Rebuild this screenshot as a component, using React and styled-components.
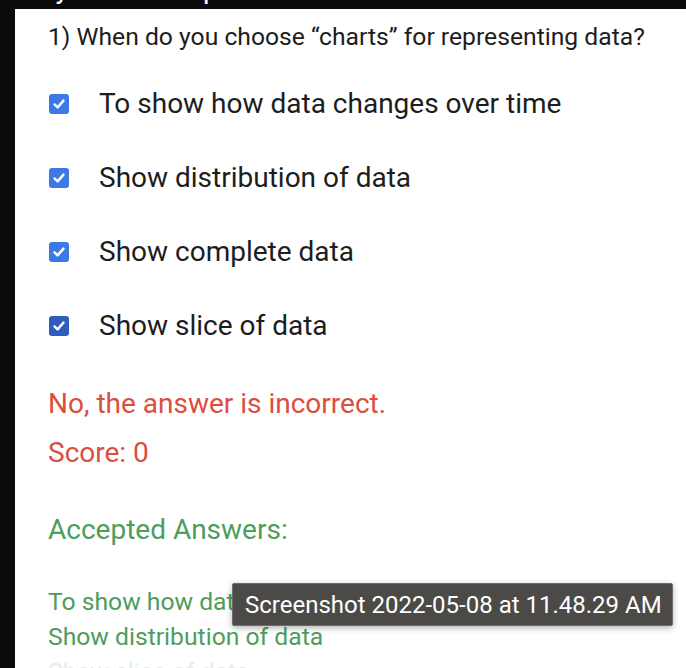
import React from "react";
import styled, { createGlobalStyle } from "styled-components";

const Global = createGlobalStyle`
  html, body { margin: 0; padding: 0; background: #0b0b0b; }
  body { font-family: Roboto, "Liberation Sans", sans-serif; overflow: hidden; }
`;

const Frame = styled.div`
  width: 686px;
  height: 668px;
  display: flex;
  flex-direction: column;
  background: #0b0b0b;
  overflow: hidden;
`;

const TopBar = styled.div`
  height: 9px;
  flex: none;
  overflow: hidden;
  display: flex;
  align-items: flex-start;
  padding-left: 31px;
`;

const TopTitle = styled.span`
  color: #ffffff;
  font-size: 28px;
  line-height: 28px;
  margin-top: -25px;
  white-space: nowrap;
`;

const Body = styled.div`
  flex: 1;
  display: flex;
  padding-left: 15px;
  min-height: 0;
`;

const Panel = styled.div`
  position: relative;
  flex: 1;
  background: #ffffff;
  padding-left: 33px;
  overflow: hidden;
`;

const Question = styled.div`
  margin-top: 14px;
  font-size: 24.7px;
  line-height: 28px;
  color: #1d1d1d;
  white-space: nowrap;
`;

const Options = styled.div`
  margin-top: 16px;
  display: flex;
  flex-direction: column;
`;

const OptionRow = styled.label`
  height: 74px;
  display: flex;
  align-items: center;
  gap: 30px;
`;

const Box = styled.span`
  width: 20px;
  height: 20px;
  border-radius: 3px;
  background: ${(p) => (p.$dark ? "#2f5dbd" : "#3c78e6")};
  display: flex;
  align-items: center;
  justify-content: center;
  flex: none;
  margin-left: 1px;
`;

const OptionText = styled.span`
  font-size: 28px;
  line-height: 32px;
  color: #1d1d1d;
  white-space: nowrap;
`;

const Feedback = styled.div`
  font-size: 28px;
  line-height: 30px;
  color: ${(p) => p.$color};
  margin-top: ${(p) => p.$mt}px;
  white-space: nowrap;
`;

const Answers = styled.div`
  margin-top: 39px;
  display: flex;
  flex-direction: column;
`;

const AnswerLine = styled.div`
  font-size: 24.7px;
  line-height: 35px;
  color: ${(p) => (p.$faded ? "#e4efe6" : "#4d9d5c")};
  white-space: nowrap;
`;

const Tooltip = styled.div`
  position: absolute;
  left: 217px;
  top: 574px;
  width: 441px;
  height: 43px;
  box-sizing: border-box;
  background: #4b4a47;
  border: 1px solid #6f6e6b;
  border-radius: 2px;
  box-shadow: 0 2px 6px rgba(0, 0, 0, 0.3);
  color: #ffffff;
  font-size: 24px;
  display: flex;
  align-items: center;
  padding-left: 12px;
  white-space: nowrap;
`;

const Check = () => (
  <svg width="14" height="14" viewBox="0 0 14 14">
    <path d="M2.5 7.4 L5.6 10.4 L11.5 3.6" fill="none" stroke="#fff" strokeWidth="2.4" strokeLinecap="round" strokeLinejoin="round" />
  </svg>
);

const options = [
  "To show how data changes over time",
  "Show distribution of data",
  "Show complete data",
  "Show slice of data",
];

export default function App() {
  return (
    <Frame>
      <Global />
      <TopBar>
        <TopTitle>My Course Report</TopTitle>
      </TopBar>
      <Body>
        <Panel>
          <Question>1) When do you choose “charts” for representing data?</Question>
          <Options>
            {options.map((o, i) => (
              <OptionRow key={o}>
                <Box $dark={i === 3}>
                  <Check />
                </Box>
                <OptionText>{o}</OptionText>
              </OptionRow>
            ))}
          </Options>
          <Feedback $color="#d94f40" $mt={26}>No, the answer is incorrect.</Feedback>
          <Feedback $color="#d94f40" $mt={19}>Score: 0</Feedback>
          <Feedback $color="#4d9d5c" $mt={47}>Accepted Answers:</Feedback>
          <Answers>
            <AnswerLine>To show how data changes over time</AnswerLine>
            <AnswerLine>Show distribution of data</AnswerLine>
            <AnswerLine $faded>Show slice of data</AnswerLine>
          </Answers>
          <Tooltip>Screenshot 2022-05-08 at 11.48.29 AM</Tooltip>
        </Panel>
      </Body>
    </Frame>
  );
}
